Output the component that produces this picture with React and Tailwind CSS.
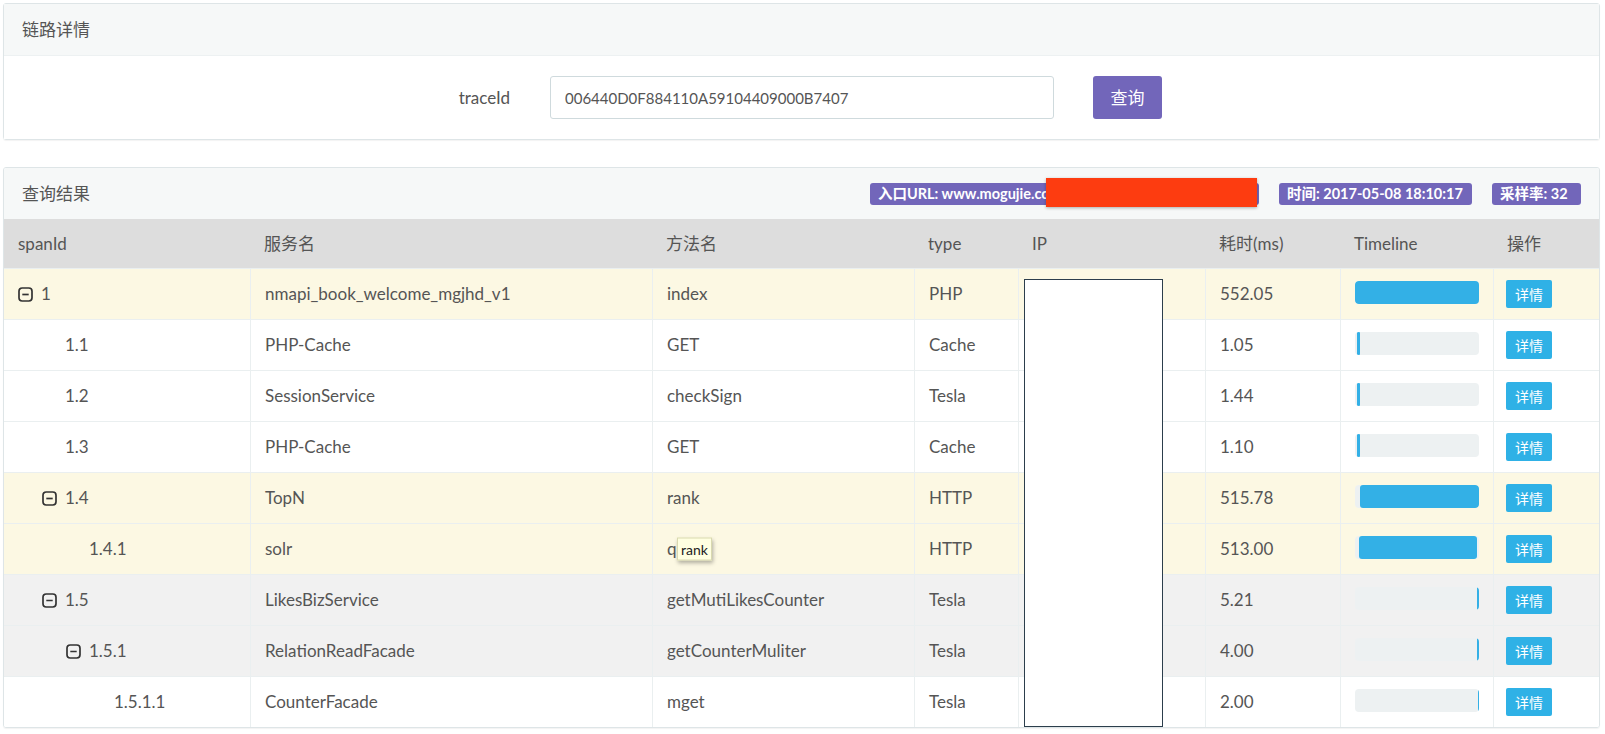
import React from 'react'

const rows = [
  { id: '1', level: 0, toggle: true, service: 'nmapi_book_welcome_mgjhd_v1', method: 'index', type: 'PHP', cost: '552.05', bar: [0, 127], tone: 'warn' },
  { id: '1.1', level: 1, service: 'PHP-Cache', method: 'GET', type: 'Cache', cost: '1.05', bar: [2, 3], tone: 'plain' },
  { id: '1.2', level: 1, service: 'SessionService', method: 'checkSign', type: 'Tesla', cost: '1.44', bar: [2, 3], tone: 'plain' },
  { id: '1.3', level: 1, service: 'PHP-Cache', method: 'GET', type: 'Cache', cost: '1.10', bar: [2, 3], tone: 'plain' },
  { id: '1.4', level: 1, toggle: true, service: 'TopN', method: 'rank', type: 'HTTP', cost: '515.78', bar: [5, 119], tone: 'warn' },
  { id: '1.4.1', level: 2, service: 'solr', method: 'query', type: 'HTTP', cost: '513.00', bar: [4, 118], tone: 'warn', tip: 'rank' },
  { id: '1.5', level: 1, toggle: true, service: 'LikesBizService', method: 'getMutiLikesCounter', type: 'Tesla', cost: '5.21', bar: [122, 3], tone: 'muted' },
  { id: '1.5.1', level: 2, toggle: true, service: 'RelationReadFacade', method: 'getCounterMuliter', type: 'Tesla', cost: '4.00', bar: [122, 3], tone: 'muted' },
  { id: '1.5.1.1', level: 3, service: 'CounterFacade', method: 'mget', type: 'Tesla', cost: '2.00', bar: [123, 3], tone: 'plain' },
]

const toneBg = {
  warn: 'bg-[#fcf8e3]',
  muted: 'bg-[#f1f1f1]',
  plain: 'bg-white',
}

const indent = ['pl-[14px]', 'pl-[38px]', 'pl-[62px]', 'pl-[87px]']

const cols = 'grid grid-cols-[246px_402px_262px_104px_187px_135px_153px_1fr]'

const MinusSquare = () => (
  <svg width="15" height="15" viewBox="0 0 15 15" className="shrink-0">
    <rect x="1" y="1" width="13" height="13" rx="3.2" fill="none" stroke="#333" strokeWidth="1.7" />
    <path d="M4.3 7.5h6.4" stroke="#333" strokeWidth="1.7" />
  </svg>
)

const Cell = ({ children, first, className = 'px-[14px]' }) => (
  <div className={`flex items-center ${first ? '' : 'border-l border-[#eaeff0]'} ${className}`}>
    {children}
  </div>
)

export default function App() {
  return (
    <div className="w-[1605px] h-[734px] bg-white pl-[3px] pr-[5px] py-[3px] font-[Lato,'Noto_Sans_CJK_SC',sans-serif] text-[17px] text-[#555] flex flex-col gap-[27px]">
      {/* 链路详情 */}
      <div className="border border-[#dee5e7] rounded-[3px] shadow-[0_1px_1px_rgba(0,0,0,0.05)]">
        <div className="h-[52px] bg-[#f6f8f8] border-b border-[#edf1f2] flex items-center px-[18px]">
          <span className="text-[#555]">链路详情</span>
        </div>
        <div className="h-[83px] flex items-center bg-white">
          <div className="w-[506px] text-right">traceId</div>
          <input
            readOnly
            value="006440D0F884110A59104409000B7407"
            className="ml-[40px] w-[504px] h-[43px] border border-[#cfdadd] rounded-[3px] px-[14px] text-[15px] text-[#555] outline-none"
          />
          <button className="ml-[39px] w-[69px] h-[43px] rounded-[3px] bg-[#7266ba] text-white text-[17px]">查询</button>
        </div>
      </div>

      {/* 查询结果 */}
      <div className="border border-[#dee5e7] rounded-[3px] shadow-[0_1px_1px_rgba(0,0,0,0.05)] overflow-hidden">
        <div className="h-[51px] bg-[#f6f8f8] flex items-center px-[18px]">
          <span className="text-[#555]">查询结果</span>
          <div className="ml-auto flex items-center gap-[20px] text-[14.5px] font-bold text-white">
            <div className="relative w-[389px] h-[22px] rounded-[3px] bg-[#7266ba] flex items-center px-[8px]">
              入口URL: www.mogujie.com/
              <div className="absolute left-[176px] -top-[5px] w-[211px] h-[29px] bg-[#fd3c10] shadow-[0_1px_3px_rgba(0,0,0,0.3)]" />
            </div>
            <div className="w-[193px] h-[22px] rounded-[3px] bg-[#7266ba] flex items-center px-[8px]">时间: 2017-05-08 18:10:17</div>
            <div className="w-[89px] h-[22px] rounded-[3px] bg-[#7266ba] flex items-center px-[8px]">采样率: 32</div>
          </div>
        </div>

        <div className="relative">
          <div className={`${cols} h-[49px] bg-[#dddddd]`}>
            {['spanId', '服务名', '方法名', 'type', 'IP', '耗时(ms)', 'Timeline', '操作'].map((h) => (
              <div key={h} className="flex items-center px-[14px]">{h}</div>
            ))}
          </div>

          {rows.map((r) => (
            <div key={r.id} className={`${cols} h-[51px] border-t border-[#eaeff0] ${toneBg[r.tone]}`}>
              <Cell first className={indent[r.level]}>
                <div className="flex items-center gap-[8px]">
                  <div className="w-[15px] flex items-center">{r.toggle && <MinusSquare />}</div>
                  <span>{r.id}</span>
                </div>
              </Cell>
              <Cell>{r.service}</Cell>
              <Cell>
                <span className="relative">
                  {r.method}
                  {r.tip && (
                    <span className="absolute left-[10px] top-1/2 -translate-y-1/2 h-[23px] px-[3px] flex items-center bg-[#ffffe1] border border-[#d9d9b0] shadow-[1px_2px_4px_rgba(0,0,0,0.3)] text-[14px] text-[#222]">
                      {r.tip}
                    </span>
                  )}
                </span>
              </Cell>
              <Cell>{r.type}</Cell>
              <Cell />
              <Cell>{r.cost}</Cell>
              <Cell>
                <div className="relative w-[127px] h-[23px] mb-[4px] rounded-[4px] bg-[#edf1f2] overflow-hidden">
                  <div
                    className={`absolute top-0 bottom-0 bg-[#33b0e6] ${r.bar[1] > 10 ? 'rounded-[3px]' : 'rounded-[1px]'}`}
                    style={{ left: r.bar[0], width: r.bar[1] }}
                  />
                </div>
              </Cell>
              <Cell className="px-[12px]">
                <button className="w-[46px] h-[28px] rounded-[2px] bg-[#2fb1e6] text-white text-[14px]">详情</button>
              </Cell>
            </div>
          ))}

          {/* redacted IP column */}
          <div className="absolute left-[1020px] top-[60px] w-[139px] h-[448px] bg-white border border-[#2c3e4c]" />
        </div>
      </div>
    </div>
  )
}
